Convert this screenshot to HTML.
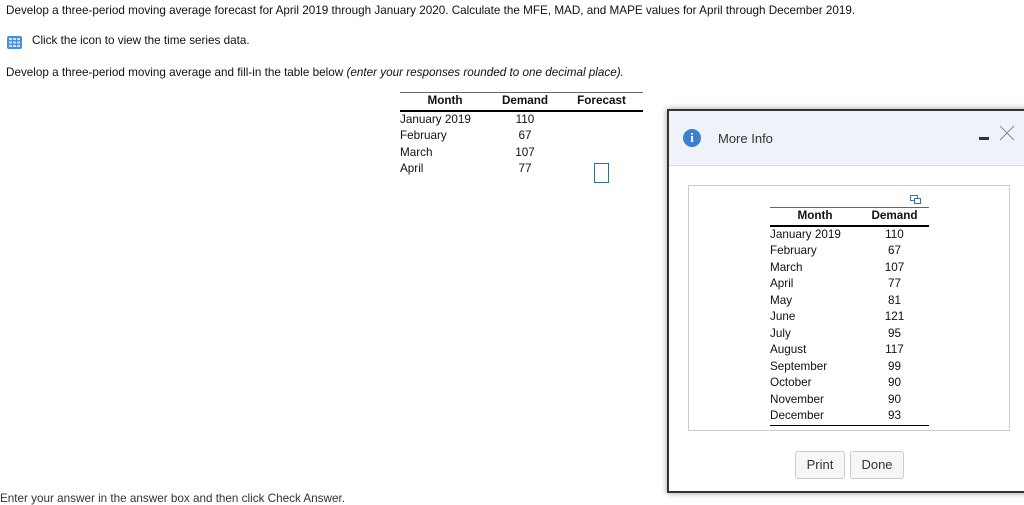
<!DOCTYPE html>
<html><head><style>
body{margin:0;width:1024px;height:502px;overflow:hidden;background:#fff;font-family:"Liberation Sans",Arial,sans-serif;font-size:11.7px;color:#111;position:relative}
.a{position:absolute;white-space:nowrap}
table{border-collapse:collapse;font-size:11.7px}
td,th{padding:0;height:16.5px;line-height:16.5px}
</style></head><body>
<div class="a" style="left:6px;top:4px">Develop a three-period moving average forecast for April 2019 through January 2020. Calculate the MFE, MAD, and MAPE values for April through December 2019.</div>
<div class="a" style="left:7px;top:36px;width:15px;height:13px;background:#4a90d9;border-radius:2px">
<svg width="15" height="13"><g fill="#cfe3f8"><rect x="2" y="2" width="3" height="2"/><rect x="6" y="2" width="3" height="2"/><rect x="10" y="2" width="3" height="2"/><rect x="2" y="5.5" width="3" height="2"/><rect x="6" y="5.5" width="3" height="2"/><rect x="10" y="5.5" width="3" height="2"/><rect x="2" y="9" width="3" height="2"/><rect x="6" y="9" width="3" height="2"/><rect x="10" y="9" width="3" height="2"/></g></svg></div>
<div class="a" style="left:32px;top:34px">Click the icon to view the time series data.</div>
<div class="a" style="left:6px;top:66px">Develop a three-period moving average and fill-in the table below <i>(enter your responses rounded to one decimal place).</i></div>
<table class="a" style="left:400px;top:92px;width:243px">
<tr style="border-top:1px solid #666;border-bottom:2px solid #000"><th style="width:90px">Month</th><th style="width:70px">Demand</th><th>Forecast</th></tr>
<tr><td>January 2019</td><td style="text-align:center">110</td><td></td></tr>
<tr><td>February</td><td style="text-align:center">67</td><td></td></tr>
<tr><td>March</td><td style="text-align:center">107</td><td></td></tr>
<tr><td>April</td><td style="text-align:center">77</td><td></td></tr>
</table>
<div class="a" style="left:594px;top:163px;width:13px;height:18px;border:1px solid #3b6b8f"></div>
<div class="a" style="left:0;top:492px;color:#333">Enter your answer in the answer box and then click Check Answer.</div>

<div class="a" style="left:667px;top:109px;width:370px;height:380px;border:2px solid #333;background:#fff;box-shadow:0 0 6px rgba(0,0,0,.4)">
<div style="height:54px;background:#eff3f9;border-bottom:1px solid #cfe2f0;position:relative">
<div class="a" style="left:14px;top:18px;width:18px;height:18px;border-radius:50%;background:#3b7fcf;color:#fff;font:bold 13px 'Liberation Serif',serif;text-align:center;line-height:18px">i</div>
<div class="a" style="left:49px;top:20px;font-size:13px;color:#333">More Info</div>
<div class="a" style="left:310px;top:26px;width:10px;height:3px;background:#333"></div>
<svg class="a" style="left:330px;top:14px" width="16" height="16"><path d="M1 1L15 15M15 1L1 15" stroke="#888" stroke-width="1"/></svg>
</div>
<div class="a" style="left:19px;top:74px;width:320px;height:244px;border:1px solid #ccc">
<svg class="a" style="left:221px;top:9px" width="12" height="10"><rect x="0.5" y="0.5" width="7" height="5" fill="none" stroke="#3b6fb0"/><rect x="4.5" y="3.5" width="6" height="5" fill="#fff" stroke="#3b6fb0"/></svg>
<table class="a" style="left:81px;top:21px;width:159px">
<tr style="border-top:1px solid #666;border-bottom:2px solid #000"><th style="width:90px">Month</th><th>Demand</th></tr>
<tr><td>January 2019</td><td style="text-align:center">110</td></tr>
<tr><td>February</td><td style="text-align:center">67</td></tr>
<tr><td>March</td><td style="text-align:center">107</td></tr>
<tr><td>April</td><td style="text-align:center">77</td></tr>
<tr><td>May</td><td style="text-align:center">81</td></tr>
<tr><td>June</td><td style="text-align:center">121</td></tr>
<tr><td>July</td><td style="text-align:center">95</td></tr>
<tr><td>August</td><td style="text-align:center">117</td></tr>
<tr><td>September</td><td style="text-align:center">99</td></tr>
<tr><td>October</td><td style="text-align:center">90</td></tr>
<tr><td>November</td><td style="text-align:center">90</td></tr>
<tr style="border-bottom:1px solid #000"><td>December</td><td style="text-align:center">93</td></tr>
</table></div>
<div class="a" style="left:126px;top:340px;width:48px;height:26px;border:1px solid #ccc;border-radius:3px;background:#f6f6f6;text-align:center;line-height:26px;font-size:13px;color:#333">Print</div>
<div class="a" style="left:181px;top:340px;width:52px;height:26px;border:1px solid #ccc;border-radius:3px;background:#f6f6f6;text-align:center;line-height:26px;font-size:13px;color:#333">Done</div>
</div>
</body></html>
